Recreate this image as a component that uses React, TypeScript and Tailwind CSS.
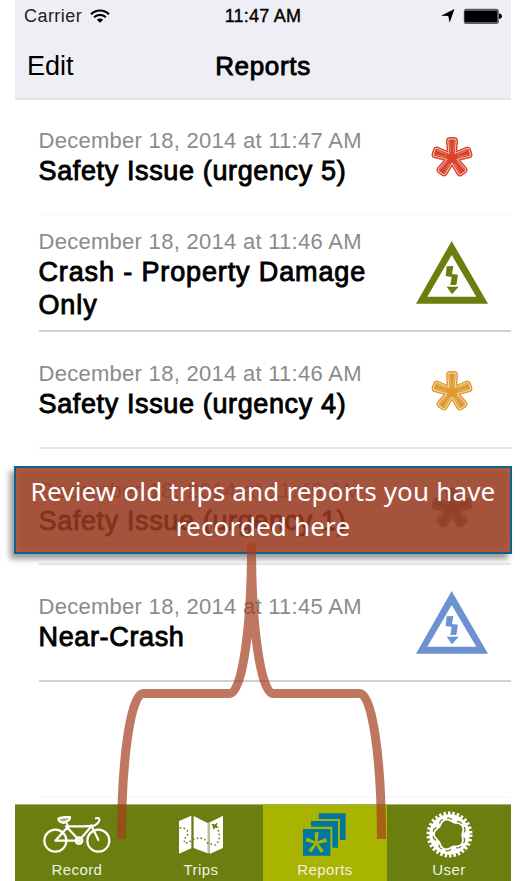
import React from "react";

const SANS = "font-['Liberation_Sans',Arial,sans-serif]";
const MEDIUM = "[-webkit-text-stroke:0.9px_black]";

function Asterisk({ color, light }: { color: string; light: string }) {
  const arms = [0, 72, 144, 216, 288];
  const arm = "M-0.6 0 L-2 -16.6 L2 -16.6 L0.6 0 Z";
  const layer = (stroke: string, width: number) => (
    <g stroke={stroke} strokeWidth={width} fill={stroke} strokeLinejoin="round">
      {arms.map((a) => (
        <path key={a} d={arm} transform={`rotate(${a})`} />
      ))}
    </g>
  );
  return (
    <svg className="h-[46px] w-[46px]" viewBox="-23 -23.7 46 46">
      {layer(color, 8)}
      {layer(light, 5.2)}
      {layer(color, 3.4)}
      <g fill="none" stroke={light} strokeWidth="0.5" strokeOpacity="0.8">
        {arms.map((a) => (
          <path key={a} d="M-1.4 -6 L-2.5 -16.4 M1.4 -6 L2.5 -16.4" transform={`rotate(${a})`} />
        ))}
      </g>
    </svg>
  );
}

function Warning({ color }: { color: string }) {
  return (
    <svg className="h-[64px] w-[72px]" viewBox="48 34 216 192">
      <path fillRule="evenodd" fill={color} d="M155 34 L264 222 H48 Z M155 76 L82 201 H229 Z" />
      <path fill={color} d="M140 110 L160 109 L156 133 L174 135 L169 166 L151 166 L155 142 L137 139 Z" />
      <path fill={color} d="M140 171 H176 L156 194 Z" />
    </svg>
  );
}

type Report = {
  time: string;
  title: string;
  row: string;
  tracking: string;
  iconBox: string;
  icon: React.ReactNode;
};

const REPORTS: Report[] = [
  {
    time: "11:47",
    title: "Safety Issue (urgency 5)",
    row: "h-[117px] pt-[28px] border-[#fbfbfb]",
    tracking: "tracking-[0.63px]",
    iconBox: "pt-[7px]",
    icon: <Asterisk color="#d9432a" light="#f3cfc8" />,
  },
  {
    time: "11:46",
    title: "Crash - Property Damage Only",
    row: "h-[116px] pt-[12px] border-[#cfcfd1]",
    tracking: "tracking-[0.87px]",
    iconBox: "pt-[13px]",
    icon: <Warning color="#6a7f10" />,
  },
  {
    time: "11:46",
    title: "Safety Issue (urgency 4)",
    row: "h-[117px] pt-[28px] border-[#e5e5e7]",
    tracking: "tracking-[0.63px]",
    iconBox: "pt-[8px]",
    icon: <Asterisk color="#df9a30" light="#f3e3c4" />,
  },
  {
    time: "11:46",
    title: "Safety Issue (urgency 1)",
    row: "h-[116px] pt-[28px] border-[#e8e8e8]",
    tracking: "tracking-[0.63px]",
    iconBox: "pt-[8px]",
    icon: <Asterisk color="#666666" light="#c8c8c8" />,
  },
  {
    time: "11:45",
    title: "Near-Crash",
    row: "h-[117px] pt-[28px] border-[#cfcfd4]",
    tracking: "tracking-[0.65px]",
    iconBox: "-mt-[2px]",
    icon: <Warning color="#6c92d2" />,
  },
];

function Bike() {
  return (
    <svg className="h-[42px] w-[70px]" viewBox="125 67 210 126" fill="none" stroke="#fff" strokeWidth="6.5" strokeLinejoin="round" strokeLinecap="round">
      <circle cx="165" cy="147" r="33" />
      <circle cx="294" cy="147" r="33" />
      <circle cx="236" cy="147" r="10" fill="#fff" fillOpacity=".75" />
      <path d="M165 147 L204 104 H272 M165 147 H236 M197 104 L231 140 M242 140 L271 107 M205 106 L196 90 M273 101 L294 145 M254 103 H274 C286 103 297 92 297 84 C297 77 290 79 287 80" />
      <path d="M174 81 C184 74 197 77 209 76 C211 88 199 88 190 94 C184 91 174 91 174 81 Z" fill="#fff" fillOpacity=".4" />
    </svg>
  );
}

function TripMap() {
  return (
    <svg className="h-[39px] w-[46px]" viewBox="533 73 138 117">
      <path fill="#b8bf98" d="M621 97 L631 93 V188 L621 188 Z" />
      <path fill="#fff" d="M536 91 L573 75 V173 L536 189 Z M580 76 L622 97 V188 L580 172 Z M629 95 L668 75 V172 L629 189 Z" />
      <path
        fill="none"
        stroke="#6a7f10"
        strokeWidth="4.5"
        strokeDasharray="5 7"
        d="M538 111 L550 112 L561 119 L562 133 L551 146 L553 158 L566 155 L578 146 L598 141 L614 147 L622 157 L645 163 L656 150 L657 130 L652 112"
      />
      <path fill="#6a7f10" stroke="#6a7f10" strokeWidth="3" d="M635 101 L643 103 L650 98 L648 105 L653 111 L645 110 L639 115 L639 108 Z" />
    </svg>
  );
}

function ReportStack() {
  return (
    <svg className="mr-[2px] h-[43px] w-[43px]" viewBox="123 70 129 129">
      <path fill="#0077a0" d="M170 71 H251 V151 H234 V88 H170 Z M147 94 H228 V174 H211 V111 H147 Z M123 118 H205 V198 H123 Z" />
      <g fill="#a9b400" transform="translate(163 160)">
        {[0, 72, 144, 216, 288].map((a) => (
          <path key={a} transform={`rotate(${a})`} d="M-3 2 L-5 -32 H7 L3 2 Z" />
        ))}
      </g>
    </svg>
  );
}

function Chainring() {
  const spokes = [20, 92, 164, 236, 308];
  return (
    <svg className="h-[47px] w-[47px]" viewBox="-71 -71 142 142">
      <circle r="64" fill="none" stroke="#fff" strokeWidth="11" strokeDasharray="7.4 6" />
      <circle r="52.5" fill="none" stroke="#fff" strokeWidth="17" />
      {spokes.map((a) => (
        <g key={a} transform={`rotate(${a})`}>
          <path fill="#fff" d="M-28 -37 Q-14 -40 -8 -37 Q0 -34 8 -37 Q14 -40 28 -37 L22 -48 H-22 Z" />
          <path fill="none" stroke="#6a7f10" strokeWidth="3.5" strokeLinecap="round" d="M-23 -44 Q-15 -49 -9 -44 M23 -44 Q15 -49 9 -44" />
        </g>
      ))}
    </svg>
  );
}

function Tab({ label, active, children }: { label: string; active?: boolean; children: React.ReactNode }) {
  return (
    <div className={`flex w-[124px] flex-col items-center border-t border-[#a5ae75] ${active ? "bg-[#a9b400]" : "bg-[#6a7f10]"}`}>
      <div className="flex h-[56px] items-center justify-center pt-[3px]">{children}</div>
      <span className="text-[15px] leading-[18px] tracking-[0.4px] text-[#f0f3e0]">{label}</span>
    </div>
  );
}

export default function App() {
  return (
    <div className={`relative h-[881px] w-[523px] overflow-hidden bg-white text-black ${SANS}`}>
      <div className="ml-[15px] flex h-[881px] w-[496px] flex-col bg-white">
        <header className="h-[100px] border-b-2 border-[#e3e3e6] bg-[#efeef4]">
          <div className="grid h-[32px] grid-cols-3 items-center pl-[9px] pr-[9px]">
            <div className="flex items-center gap-[8px] text-[#222]">
              <span className="text-[18px] tracking-[0.45px]">Carrier</span>
              <svg className="mb-px h-[14px] w-[20px]" viewBox="0 0 20 14" fill="none" stroke="#000" strokeWidth="2.1">
                <path d="M1 5.3 C6 0.2 14 0.2 19 5.3 M4.1 8.3 C7.4 5 12.6 5 15.9 8.3" />
                <path d="M6.8 10.8 C8.6 9.2 11.4 9.2 13.2 10.8 L10 13.8 Z" fill="#000" stroke="none" />
              </svg>
            </div>
            <span className="text-center text-[18px] tracking-[0.25px] [-webkit-text-stroke:0.4px_black]">11:47 AM</span>
            <div className="flex items-center justify-end gap-[8px]">
              <svg className="h-[14px] w-[14px]" viewBox="0 0 14 14">
                <path d="M0 6.7 L13.5 0 L8.6 13.8 L7.3 7 Z" />
              </svg>
              <svg className="h-[17px] w-[39px]" viewBox="0 0 39 17">
                <rect x=".8" y=".8" width="35" height="15.2" rx="2.5" fill="#5c5c60" />
                <rect x="1.6" y="3" width="32.5" height="11" rx="1" />
                <path d="M36 5.5 Q39 6 39 8.3 Q39 10.5 36 11 Z" />
              </svg>
            </div>
          </div>
          <div className="grid h-[66px] grid-cols-3 items-center pl-[12px] pr-[12px] pt-[2px]">
            <span className="text-[27px]">Edit</span>
            <span className={`text-center text-[26px] tracking-[0.65px] ${MEDIUM}`}>Reports</span>
          </div>
        </header>

        <main className="-mt-px h-[705px] pl-[24px]">
          {REPORTS.map((r) => (
            <section key={r.title} className={`flex border-b-2 ${r.row}`}>
              <div className="w-[370px]">
                <p className="-ml-[0.5px] text-[22px] leading-[28px] tracking-[0.28px] text-[#8b8b8b]">December 18, 2014 at {r.time} AM</p>
                <h2 className={`-ml-[0.5px] w-[350px] text-[27px] leading-[33px] ${r.tracking} ${MEDIUM}`}>{r.title}</h2>
              </div>
              <div className={`flex h-[80px] w-[86px] items-start justify-center ${r.iconBox}`}>{r.icon}</div>
            </section>
          ))}
          <div className="h-[116px] border-b-2 border-[#fafafa]" />
        </main>

        <nav className="flex h-[77px]">
          <Tab label="Record"><Bike /></Tab>
          <Tab label="Trips"><TripMap /></Tab>
          <Tab label="Reports" active><ReportStack /></Tab>
          <Tab label="User"><Chainring /></Tab>
        </nav>
      </div>

      <div className="absolute left-[14px] top-[466px] h-[88px] w-[498px] border-2 border-[#11628a] bg-[rgba(152,58,32,0.87)] pt-[6px] text-center font-['Noto_Sans',sans-serif] text-[26px] leading-[35px] tracking-[0.17px] text-white shadow-[-4px_5px_6px_rgba(0,0,0,0.4),inset_0_0_10px_rgba(190,100,75,0.6)]">
        <p className="whitespace-nowrap">Review old trips and reports you have</p>
        <p className="whitespace-nowrap">recorded here</p>
      </div>

      <svg className="pointer-events-none absolute left-0 top-0 h-[881px] w-[523px]" viewBox="0 0 523 881" fill="none">
        <path
          stroke="#a43d1e"
          strokeOpacity="0.7"
          strokeWidth="9"
          strokeLinejoin="round"
          d="M121.5 839 C121.5 758 131 693.5 143 693.5 H230 C242 693.5 251.5 628 251.5 547.5 C251.5 628 261 693.5 273 693.5 H360 C372 693.5 381.5 758 381.5 839"
        />
      </svg>
    </div>
  );
}
